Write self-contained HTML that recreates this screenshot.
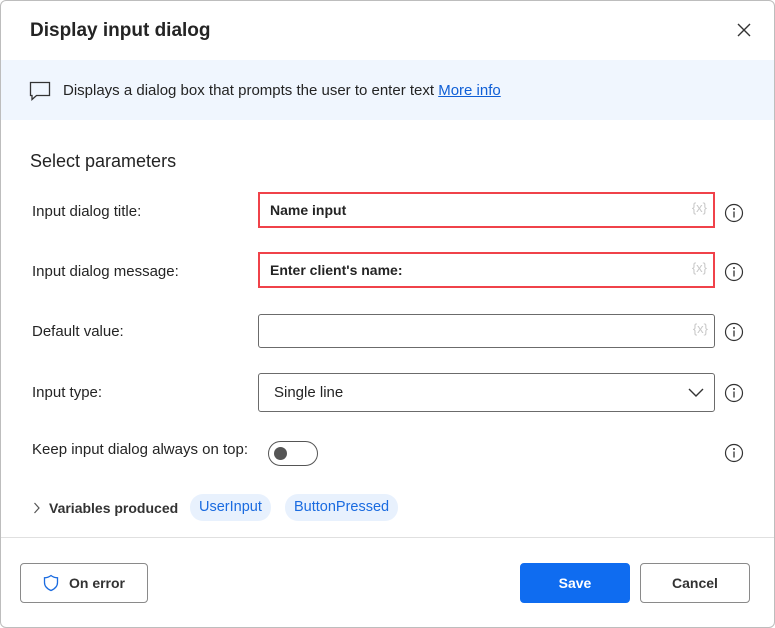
<!DOCTYPE html>
<html><head><style>
*{box-sizing:border-box;margin:0;padding:0}
body{width:775px;height:628px;background:#fff;font-family:"Liberation Sans",sans-serif;color:#242424;overflow:hidden;position:relative}
.win{position:absolute;left:0;top:0;width:775px;height:628px;border:1px solid #bdbdbd;border-radius:6px;overflow:hidden}
.in{position:absolute;left:-1px;top:-1px;width:775px;height:628px}
.a{position:absolute}
.lbl{position:absolute;left:32px;font-size:15px;color:#242424}
.inp{position:absolute;left:258px;width:457px;border:1px solid #6b6b6b;border-radius:3px;font-size:15px;padding-left:10px;display:flex;align-items:center}
.red{border:2px solid #f0424a;border-radius:0;font-weight:bold;font-size:14px}
.fx{position:absolute;right:6px;top:6px;color:#c8c8c8;font-size:13px}
.info{position:absolute;left:724px;width:20px;height:20px}
.chip{position:absolute;top:494px;height:27px;background:#e8f1fd;color:#1a6be0;border-radius:13px;font-size:14.5px;line-height:27px;padding:0 9px}
.btn{position:absolute;top:563px;height:40px;border:1px solid #8a8a8a;border-radius:4px;font-size:14px;font-weight:bold;display:flex;align-items:center;justify-content:center}
</style></head><body><div class="win"><div class="in">
<div class="a" style="left:30px;top:20px;font-size:19px;font-weight:bold;color:#242424">Display input dialog</div>
<svg class="a" style="left:737px;top:23px" width="14" height="14"><path d="M1 1L13 13M13 1L1 13" stroke="#333" stroke-width="1.4"/></svg>
<div class="a" style="left:0;top:60px;width:775px;height:60px;background:#f0f6fe"></div>
<svg class="a" style="left:29px;top:81px" width="22" height="20"><path d="M1.5 1.5H20.5V14.5H7.5L3 18.5V14.5H1.5Z" fill="none" stroke="#333" stroke-width="1.3"/></svg>
<div class="a" style="left:63px;top:82px;font-size:15px">Displays a dialog box that prompts the user to enter text <span style="color:#0f5fd6;text-decoration:underline">More info</span></div>
<div class="a" style="left:30px;top:151px;font-size:18px">Select parameters</div>

<div class="lbl" style="top:203px">Input dialog title:</div>
<div class="inp red" style="top:192px;height:36px">Name input<span class="fx" style="font-weight:normal">{x}</span></div>
<div class="lbl" style="top:263px">Input dialog message:</div>
<div class="inp red" style="top:252px;height:36px">Enter client's name:<span class="fx" style="font-weight:normal">{x}</span></div>
<div class="lbl" style="top:323px">Default value:</div>
<div class="inp" style="top:314px;height:34px"><span class="fx">{x}</span></div>
<div class="lbl" style="top:384px">Input type:</div>
<div class="inp" style="top:373px;height:39px;padding-left:15px">Single line
<svg class="a" style="right:10px;top:14px" width="16" height="10"><path d="M1 1L8 8L15 1" fill="none" stroke="#333" stroke-width="1.4"/></svg></div>
<div class="lbl" style="top:441px">Keep input dialog always on top:</div>
<div class="a" style="left:268px;top:441px;width:50px;height:25px;border:1px solid #555;border-radius:13px"><div class="a" style="left:5px;top:5px;width:13px;height:13px;border-radius:50%;background:#555"></div></div>

<svg class="info" style="top:203px" viewBox="0 0 20 20"><circle cx="10" cy="10" r="8.5" fill="none" stroke="#333" stroke-width="1.2"/><circle cx="10" cy="6" r="1" fill="#333"/><path d="M10 8.5V14.5" stroke="#333" stroke-width="1.3"/></svg>
<svg class="info" style="top:262px" viewBox="0 0 20 20"><circle cx="10" cy="10" r="8.5" fill="none" stroke="#333" stroke-width="1.2"/><circle cx="10" cy="6" r="1" fill="#333"/><path d="M10 8.5V14.5" stroke="#333" stroke-width="1.3"/></svg>
<svg class="info" style="top:322px" viewBox="0 0 20 20"><circle cx="10" cy="10" r="8.5" fill="none" stroke="#333" stroke-width="1.2"/><circle cx="10" cy="6" r="1" fill="#333"/><path d="M10 8.5V14.5" stroke="#333" stroke-width="1.3"/></svg>
<svg class="info" style="top:383px" viewBox="0 0 20 20"><circle cx="10" cy="10" r="8.5" fill="none" stroke="#333" stroke-width="1.2"/><circle cx="10" cy="6" r="1" fill="#333"/><path d="M10 8.5V14.5" stroke="#333" stroke-width="1.3"/></svg>
<svg class="info" style="top:443px" viewBox="0 0 20 20"><circle cx="10" cy="10" r="8.5" fill="none" stroke="#333" stroke-width="1.2"/><circle cx="10" cy="6" r="1" fill="#333"/><path d="M10 8.5V14.5" stroke="#333" stroke-width="1.3"/></svg>

<svg class="a" style="left:33px;top:502px" width="8" height="12"><path d="M1.5 1L6 6L1.5 11" fill="none" stroke="#555" stroke-width="1.2"/></svg>
<div class="a" style="left:49px;top:500px;font-size:14px;font-weight:bold;color:#333">Variables produced</div>
<div class="chip" style="left:190px">UserInput</div>
<div class="chip" style="left:285px">ButtonPressed</div>
<div class="a" style="left:0;top:537px;width:775px;height:1px;background:#e0e0e0"></div>

<div class="btn" style="left:20px;width:128px;color:#333"><svg width="16" height="18" style="margin-right:10px" viewBox="0 0 16 18"><path d="M8 1.5C10 3 12.5 3.8 14.5 3.8V8.5C14.5 12.5 11.5 15 8 16.5C4.5 15 1.5 12.5 1.5 8.5V3.8C3.5 3.8 6 3 8 1.5Z" fill="none" stroke="#1a6be0" stroke-width="1.3"/></svg>On error</div>
<div class="btn" style="left:520px;width:110px;background:#0f6cf0;border-color:#0f6cf0;color:#fff">Save</div>
<div class="btn" style="left:640px;width:110px;color:#333">Cancel</div>
</div></div></body></html>
